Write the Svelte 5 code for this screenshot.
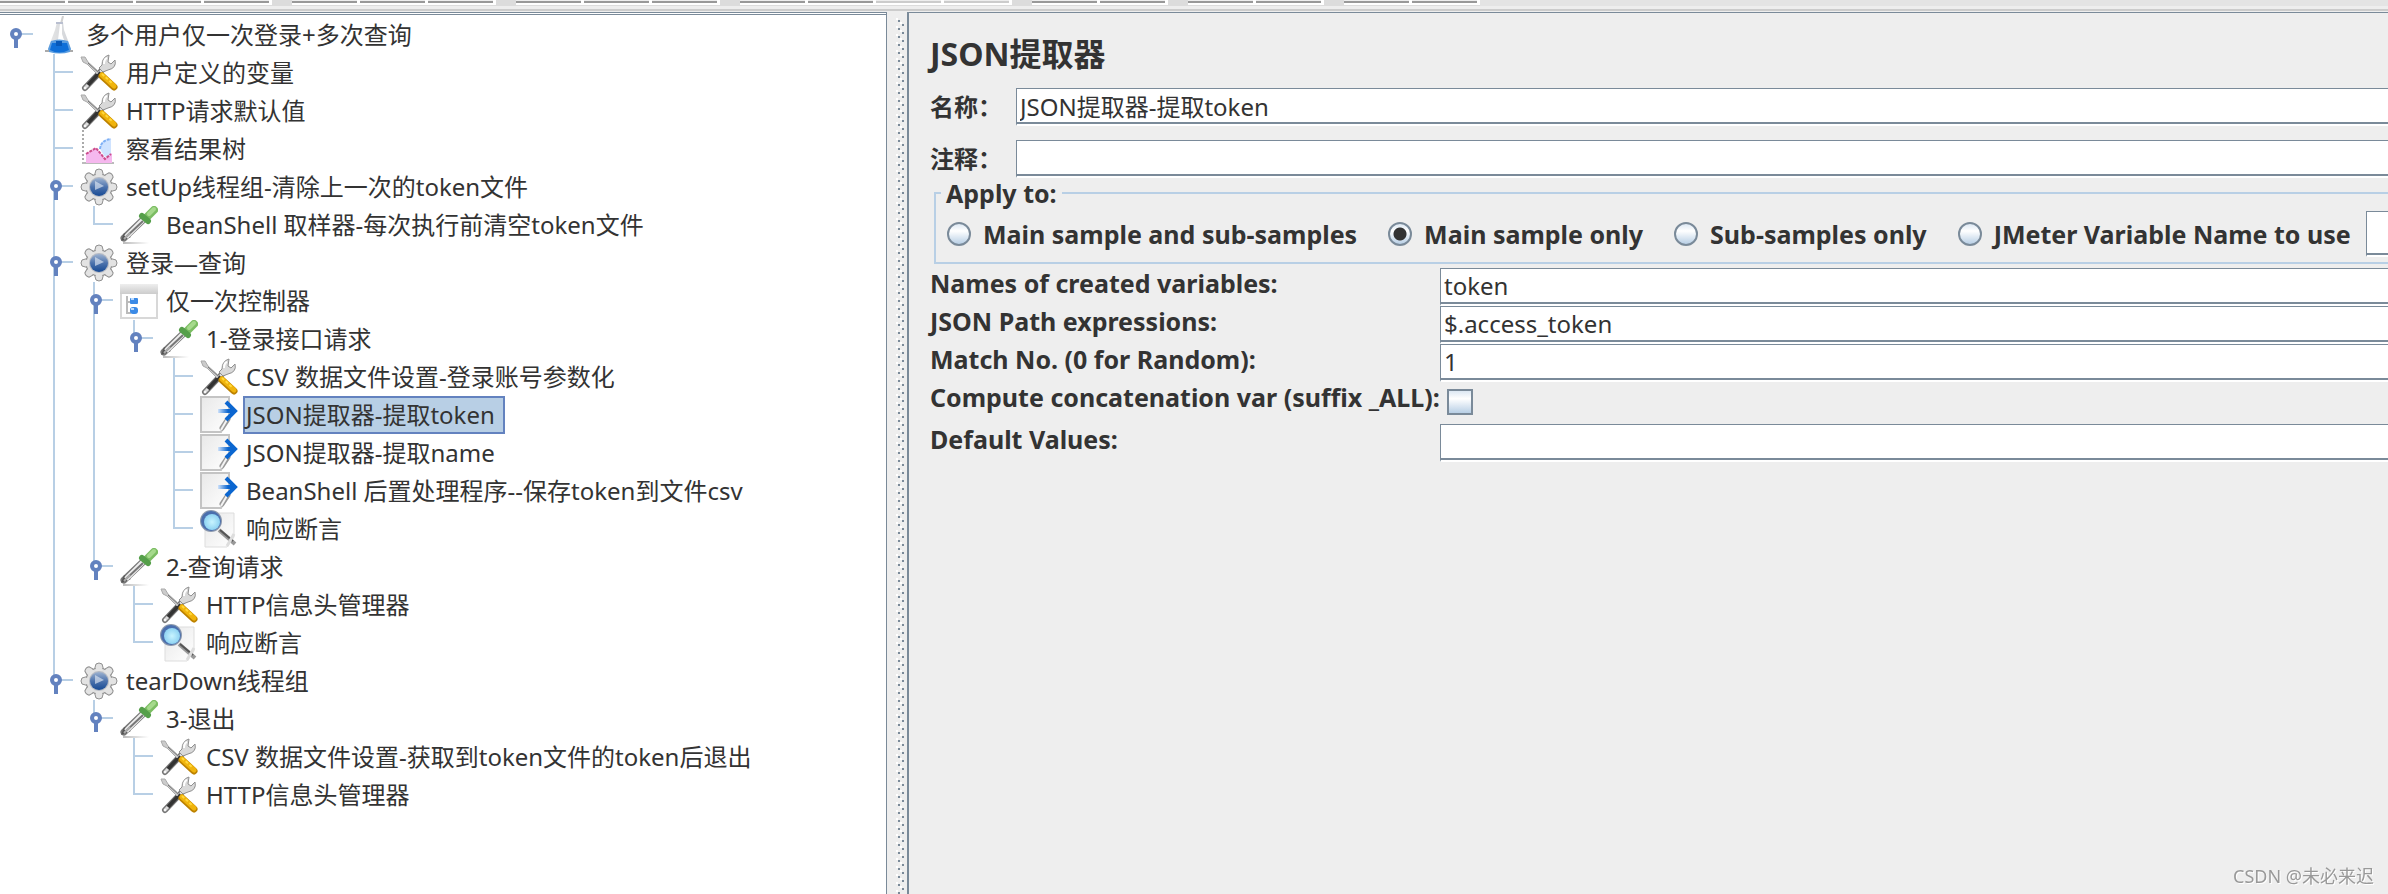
<script>
    // toolbar groups: number of buttons in each, and which are greyed out
    const toolbar = [
        [1, 1, 1, 1],
        [1, 1, 1],
        [1, 1, 1],
        [1, 1, 0, 0],
        [1, 1],
        [1, 1],
        [1, 1],
    ];

    const plan = {
        name: "多个用户仅一次登录+多次查询",
        icon: "flask",
        children: [
            { name: "用户定义的变量", icon: "tools" },
            { name: "HTTP请求默认值", icon: "tools" },
            { name: "察看结果树", icon: "chart" },
            {
                name: "setUp线程组-清除上一次的token文件",
                icon: "gear",
                children: [
                    { name: "BeanShell 取样器-每次执行前清空token文件", icon: "dropper" },
                ],
            },
            {
                name: "登录—查询",
                icon: "gear",
                children: [
                    {
                        name: "仅一次控制器",
                        icon: "controller",
                        children: [
                            {
                                name: "1-登录接口请求",
                                icon: "dropper",
                                children: [
                                    { name: "CSV 数据文件设置-登录账号参数化", icon: "tools" },
                                    { name: "JSON提取器-提取token", icon: "extract" },
                                    { name: "JSON提取器-提取name", icon: "extract" },
                                    { name: "BeanShell 后置处理程序--保存token到文件csv", icon: "extract" },
                                    { name: "响应断言", icon: "lens" },
                                ],
                            },
                        ],
                    },
                    {
                        name: "2-查询请求",
                        icon: "dropper",
                        children: [
                            { name: "HTTP信息头管理器", icon: "tools" },
                            { name: "响应断言", icon: "lens" },
                        ],
                    },
                ],
            },
            {
                name: "tearDown线程组",
                icon: "gear",
                children: [
                    {
                        name: "3-退出",
                        icon: "dropper",
                        children: [
                            { name: "CSV 数据文件设置-获取到token文件的token后退出", icon: "tools" },
                            { name: "HTTP信息头管理器", icon: "tools" },
                        ],
                    },
                ],
            },
        ],
    };

    // lines[i] is true when the vertical guide of level i goes on below the row
    function flatten(node, closed, lines = [false], id = "0") {
        const rows = [{ ...node, id, lines }];
        if (node.children && !closed[id]) {
            node.children.forEach((child, i) => {
                const more = i < node.children.length - 1;
                rows.push(...flatten(child, closed, [...lines, more], id + "." + i));
            });
        }
        return rows;
    }

    let closed = $state({});
    let selected = $state("0.4.0.0.1");
    let rows = $derived(flatten(plan, closed));

    let name = $state("JSON提取器-提取token");
    let comment = $state("");
    let scope = $state("main");
    let variable = $state("");
    let names = $state("token");
    let paths = $state("$.access_token");
    let match = $state("1");
    let concat = $state(false);
    let defaults = $state("");

    const scopes = [
        { value: "all", text: "Main sample and sub-samples" },
        { value: "main", text: "Main sample only" },
        { value: "sub", text: "Sub-samples only" },
        { value: "variable", text: "JMeter Variable Name to use" },
    ];

    const teeth = [0, 45, 90, 135, 180, 225, 270, 315];
</script>

{#snippet icon(kind)}
    <svg class="icon" viewBox="0 0 38 38" aria-hidden="true">
        {#if kind === "flask"}
            <path d="M17 6 H23 L24 14 L30 30 L31 35 H8 L9 30 L15 14 Z" fill="url(#glass)" />
            <path d="M20 8 H22 L22 18 L24 24 H18 Z" fill="#fff" />
            <path d="M21 8 L23 0" stroke="#d0d0d0" stroke-width="2" />
            <path d="M16 7 H23" stroke="#b9bfd0" stroke-width="2" />
            <path d="M11 25 Q19 22 28 25 L31 33 L30 36 Q20 39 9 36 L8 33 Z" fill="#5a9de0" />
            <path d="M12 27 H27 L29 34 Q19 39 10 34 Z" fill="#0f6fd8" />
            <path d="M16 25 H22 V30 H16 Z" fill="#0758b8" />
            <path d="M5 35 H9 M30 35 H33" stroke="#aaa" stroke-width="2" />
        {:else if kind === "tools"}
            <path d="M5 34 L25 13" stroke="#777" stroke-width="6" stroke-linecap="round" />
            <path d="M5 34 L25 13" stroke="#ddd" stroke-width="3" stroke-linecap="round" />
            <path d="M8 31 L20 18" stroke="#333" stroke-width="4" />
            <path d="M22 11 Q22 3 29 1 L28 8 L31 10 L35 6 Q37 14 28 16 L23 18 L19 14 Z" fill="#d9d9d9" stroke="#8f8f8f" />
            <path d="M24 10 Q24 5 27 4" stroke="#fff" stroke-width="2" fill="none" />
            <circle cx="5" cy="34" r="1" fill="#fff" />
            <path d="M1 3 L5 3 L8 8 L19 18 L17 20 L7 10 L3 8 Z" fill="#ccc" stroke="#aaa" />
            <path d="M8 9 L19 19" stroke="#777" stroke-width="1" />
            <path d="M22 22 L34 33" stroke="#bd8200" stroke-width="7" stroke-linecap="round" />
            <path d="M22 21 L34 32" stroke="#f0b40c" stroke-width="5" stroke-linecap="round" />
            <path d="M22 20 L33 30" stroke="#ffd83d" stroke-width="2" stroke-dasharray="3 2" />
        {:else if kind === "chart"}
            <path d="M3 0 V33" stroke="#aaa" stroke-width="2" stroke-dasharray="2 2" />
            <path d="M2 33 H34" stroke="#bbb" stroke-width="2" />
            <path d="M6 24 L16 18 L25 29 L32 23 V33 H6 Z" fill="#f5b8ee" />
            <path d="M20 19 Q20 9 31 9 V25 L25 27 Z" fill="#cfe3ff" />
            <path d="M20 19 Q21 10 31 9" stroke="#7fb0f5" stroke-width="2" fill="none" stroke-dasharray="3 1" />
            <path d="M6 24 L16 18 L25 29 L31 24" fill="none" stroke="#cc4d8c" stroke-width="2" stroke-dasharray="3 1" />
        {:else if kind === "gear"}
            {#each teeth as angle}
                <path d="M14 9 L16 2 Q19 0 22 2 L24 9 Z" fill="#e3e3e3" stroke="#8f8f8f" transform="rotate({angle} 19 19)" />
            {/each}
            <circle cx="19" cy="19" r="13" fill="#dcdcdc" stroke="#8f8f8f" />
            {#each teeth as angle}
                <path d="M15 9 L17 3 H21 L23 9 Z" fill="#e3e3e3" transform="rotate({angle} 19 19)" />
            {/each}
            <circle cx="19" cy="19" r="10" fill="#b5bac4" />
            <circle cx="19" cy="19" r="9" fill="url(#ball)" />
            <path d="M15 13 L24 18 L15 22 Z" fill="#d5e0ee" opacity=".7" />
        {:else if kind === "dropper"}
            <path d="M3 37 H29" stroke="url(#shade)" stroke-width="2" />
            <path d="M4 32 L25 12" stroke="#777" stroke-width="7" stroke-linecap="round" />
            <path d="M1 35 L4 27 L11 31 Z" fill="#555" />
            <path d="M6 31 L25 12" stroke="#eee" stroke-width="5" />
            <path d="M6 31 L23 15" stroke="#777" stroke-width="2" />
            <path d="M4 33 L10 27" stroke="#aaa" stroke-width="2" />
            <path d="M27 11 L34 4" stroke="#7cbd63" stroke-width="8" stroke-linecap="round" />
            <path d="M29 8 L34 3" stroke="#a5d98c" stroke-width="4" stroke-linecap="round" />
            <path d="M22 10 L28 15" stroke="#559f4a" stroke-width="6" stroke-linecap="round" />
        {:else if kind === "controller"}
            <rect x="1" y="3" width="36" height="33" fill="#fff" stroke="#d8d8d8" stroke-width="2" />
            <rect x="0" y="2" width="38" height="10" fill="url(#bar)" />
            <path d="M7 14 V31 H11 M7 20 H11" fill="none" stroke="#bbb" stroke-width="2" />
            <rect x="10" y="16" width="8" height="6" rx="1" fill="#3b8ae6" />
            <rect x="10" y="25" width="8" height="7" rx="3" fill="#3b8ae6" />
            <path d="M11 17 H14 M11 27 H14" stroke="#b9daff" stroke-width="2" />
        {:else if kind === "extract"}
            <path d="M1 1 H29 V20 L21 36 H1 Z" fill="url(#paper)" stroke="#c4c4c4" stroke-width="2" />
            <path d="M28 23 L22 32" stroke="#999" stroke-width="5" stroke-linecap="round" />
            <path d="M28 22 L21 34" stroke="#f4f4f4" stroke-width="2" />
            <path d="M18 15 H34" stroke="url(#fade)" stroke-width="4" />
            <path d="M26 6 L35 15 L26 24" fill="none" stroke="#0b66d0" stroke-width="4" />
        {:else if kind === "lens"}
            <path d="M5 3 H34 V27 L27 37 H5 Z" fill="url(#paper)" stroke="#ddd" />
            <path d="M19 20 L35 34" stroke="#999" stroke-width="4" />
            <path d="M20 20 L33 31" stroke="#555" stroke-width="2" />
            <path d="M27 36 L34 24" stroke="#ddd" stroke-width="3" />
            <circle cx="11" cy="11" r="11" fill="#8c99ad" />
            <circle cx="11" cy="11" r="10" fill="#4a6fae" />
            <circle cx="12" cy="12" r="8" fill="url(#water)" />
        {/if}
    </svg>
{/snippet}

<svg class="defs" aria-hidden="true">
    <defs>
        <linearGradient id="glass"><stop offset="0" stop-color="#e6e6e6" /><stop offset="1" stop-color="#d0d3d8" /></linearGradient>
        <linearGradient id="ball" x2="0" y2="1"><stop offset="0" stop-color="#9db2d0" /><stop offset=".5" stop-color="#4d73ad" /><stop offset="1" stop-color="#174a94" /></linearGradient>
        <linearGradient id="shade" gradientUnits="userSpaceOnUse" x1="3" x2="29"><stop offset="0" stop-color="#bbb" /><stop offset="1" stop-color="#fff" /></linearGradient>
        <linearGradient id="bar" x2="0" y2="1"><stop offset="0" stop-color="#eee" /><stop offset="1" stop-color="#ccc" /></linearGradient>
        <linearGradient id="paper" x2="1" y2="1"><stop offset="0" stop-color="#e8e8e8" /><stop offset="1" stop-color="#fff" /></linearGradient>
        <linearGradient id="fade" gradientUnits="userSpaceOnUse" x1="18" x2="28"><stop offset="0" stop-color="#cfe2fa" /><stop offset="1" stop-color="#0b66d0" /></linearGradient>
        <radialGradient id="water"><stop offset="0" stop-color="#c8f4ff" /><stop offset="1" stop-color="#8fd3f2" /></radialGradient>
    </defs>
</svg>

<div class="app">
    <div class="toolbar" role="toolbar" aria-label="JMeter">
        {#each toolbar as group}
            <div class="group">
                {#each group as enabled}
                    <button class="tool" disabled={!enabled} aria-label="tool"></button>
                {/each}
            </div>
        {/each}
        <div class="rest"></div>
    </div>

    <div class="split">
        <nav class="tree">
            <ul>
                {#each rows as row (row.id)}
                    <li>
                        {#each row.lines as more, level}
                            {@const last = level === row.lines.length - 1}
                            {#if last && row.children}
                                <button class="guide" aria-label={row.name} aria-expanded={!closed[row.id]} onclick={() => (closed[row.id] = !closed[row.id])}>
                                    <svg viewBox="0 0 40 38" aria-hidden="true">
                                        {#if level > 0}
                                            <path class="line" d="M14 0 V{more ? 38 : 18}" />
                                        {/if}
                                        <path class="line" d="M16 18 H33" />
                                        <path class="knob" d={closed[row.id] ? "M16 18 H30" : "M16 18 V32"} />
                                        <circle class="hole" cx="16" cy="18" r="4" />
                                    </svg>
                                </button>
                            {:else}
                                <span class="guide">
                                    <svg viewBox="0 0 40 38" aria-hidden="true">
                                        {#if more || last}
                                            <path class="line" d="M14 0 V{more ? 38 : 19}" />
                                        {/if}
                                        {#if last}
                                            <path class="line" d="M14 18 H33" />
                                        {/if}
                                    </svg>
                                </span>
                            {/if}
                        {/each}
                        {@render icon(row.icon)}
                        <button class="node {selected === row.id ? 'selected' : ''}" onclick={() => (selected = row.id)}>{row.name}</button>
                    </li>
                {/each}
            </ul>
        </nav>

        <div class="divider"></div>

        <main class="panel">
            <h1>JSON提取器</h1>

            <div class="head">
                <label for="name">名称：</label>
                <input id="name" class="field" type="text" bind:value={name} />
                <label for="comment">注释：</label>
                <input id="comment" class="field" type="text" bind:value={comment} />
            </div>

            <fieldset>
                <legend>Apply to:</legend>
                <div class="scopes">
                    {#each scopes as s}
                        <label class="scope">
                            <input type="radio" name="scope" value={s.value} bind:group={scope} />
                            {s.text}
                        </label>
                    {/each}
                    <input class="field variable" type="text" aria-label="JMeter Variable Name" bind:value={variable} />
                </div>
            </fieldset>

            <div class="form">
                <label for="names">Names of created variables:</label>
                <input id="names" class="field" type="text" bind:value={names} />
                <label for="paths">JSON Path expressions:</label>
                <input id="paths" class="field" type="text" bind:value={paths} />
                <label for="match">Match No. (0 for Random):</label>
                <input id="match" class="field" type="text" bind:value={match} />
                <label for="concat">Compute concatenation var (suffix _ALL):</label>
                <input id="concat" type="checkbox" bind:checked={concat} />
                <label for="defaults">Default Values:</label>
                <input id="defaults" class="field" type="text" bind:value={defaults} />
            </div>
        </main>
    </div>

    <div class="mark">CSDN @未必来迟</div>
</div>

<style>
    :global(body) {
        margin: 0;
        background: #eee;
    }
    .app {
        display: flex;
        flex-direction: column;
        min-height: 100vh;
        background: #eee;
        color: #333;
        font-family: "Noto Sans", "Noto Sans CJK SC", sans-serif;
        font-size: 24px;
        line-height: 34px;
    }
    button,
    input {
        font: inherit;
        color: inherit;
        margin: 0;
        padding: 0;
        border: none;
        border-radius: 0;
        background: none;
        box-sizing: border-box;
    }
    .defs {
        position: absolute;
        width: 0;
        height: 0;
    }

    /* toolbar */
    .toolbar {
        display: flex;
        gap: 20px;
        height: 12px;
        box-sizing: border-box;
        background: linear-gradient(#dcdcdc 0 6px, #eee 6px 9px, #ccc 9px 11px, #eee 11px);
    }
    .group {
        display: flex;
        gap: 3px;
        height: 5px;
        padding-right: 3px;
        background: #fff;
    }
    .tool {
        width: 65px;
        height: 3px;
        background: #eee;
        border-bottom: 2px solid #999;
    }
    .tool:disabled {
        border-bottom-color: #ccc;
    }
    .rest {
        flex: 1;
        height: 6px;
        margin-left: -20px;
        background: #e4e4e4;
    }

    .split {
        flex: 1;
        display: grid;
        grid-template-columns: 891fr 16px 1481fr;
    }

    /* tree */
    .tree {
        margin-right: 4px;
        padding-top: 1px;
        border-top: 1px solid #7a8a99;
        border-right: 1px solid #7a8a99;
        background: #fff;
    }
    ul {
        list-style: none;
        margin: 0;
        padding: 1px 0 0;
        border-top: 1px solid #7a8a99;
    }
    li {
        display: flex;
        height: 38px;
    }
    .guide {
        width: 40px;
        height: 38px;
        flex: none;
    }
    .guide svg {
        display: block;
        width: 40px;
        height: 38px;
    }
    .line {
        fill: none;
        stroke: #b8cfe5;
        stroke-width: 2;
    }
    .knob {
        fill: none;
        stroke: #6382bf;
        stroke-width: 4;
    }
    .hole {
        fill: #fff;
        stroke: #6382bf;
        stroke-width: 4;
    }
    .icon {
        display: block;
        width: 38px;
        height: 38px;
        flex: none;
    }
    .node {
        height: 38px;
        margin-left: 5px;
        padding: 0 8px 0 1px;
        border: 2px solid transparent;
        white-space: nowrap;
    }
    .node.selected {
        background: #b8cfe5;
        border-color: #6382bf;
    }

    /* split bar with the embossed dots */
    .divider {
        width: 8px;
        margin: 6px 0 0 5px;
        background: url("data:image/svg+xml,%3Csvg xmlns='http://www.w3.org/2000/svg' width='8' height='8'%3E%3Cpath fill='%23fff' d='M0 0h2v2H0zM4 4h2v2H4z'/%3E%3Cpath fill='%237a8a99' d='M2 2h2v2H2zM6 6h2v2H6z'/%3E%3C/svg%3E");
        cursor: col-resize;
    }

    /* element editor */
    .panel {
        min-width: 0;
        overflow: hidden;
        padding: 17px 0 0 21px;
        border-top: 1px solid #7a8a99;
        border-left: 2px solid #7a8a99;
    }
    h1 {
        margin: 0 0 10px;
        font-size: 32px;
        line-height: 48px;
        font-weight: bold;
    }
    label,
    legend {
        font-weight: bold;
        white-space: nowrap;
    }
    .field {
        width: 100%;
        min-width: 0;
        height: 38px;
        padding: 0 4px 2px 3px;
        border-top: 1px solid #7a8a99;
        border-left: 1px solid #7a8a99;
        border-bottom: 2px solid #fff;
        background: #fff;
        box-shadow: inset 0 -2px #7a8a99;
        outline: none;
    }
    .head {
        display: grid;
        grid-template-columns: 86px 1fr;
        row-gap: 14px;
        align-items: center;
    }
    fieldset {
        min-width: 0;
        margin: 0 0 4px 4px;
        padding: 0;
        border: 2px solid #b8cfe5;
        border-right: none;
    }
    legend {
        margin-left: 5px;
        padding: 0 5px;
        font-size: 25px;
        line-height: 30px;
    }
    .scopes {
        display: flex;
        align-items: center;
        gap: 31px;
        padding: 3px 0 5px 11px;
    }
    .scope {
        display: flex;
        align-items: center;
        gap: 12px;
        font-size: 25px;
    }
    input[type="radio"],
    input[type="checkbox"] {
        appearance: none;
        flex: none;
        border: 2px solid #7a8a99;
        background: linear-gradient(#dde8f3, #fff 35%, #b8cfe5);
    }
    input[type="radio"] {
        width: 24px;
        height: 24px;
        border-radius: 12px;
    }
    input[type="radio"]:checked {
        background:
            radial-gradient(circle, #333 6px, transparent 7px),
            linear-gradient(#dde8f3, #fff 35%, #b8cfe5);
    }
    input[type="checkbox"] {
        width: 26px;
        height: 26px;
        margin: 7px 0 9px 7px;
    }
    input[type="checkbox"]:checked {
        background: #333;
    }
    .variable {
        flex: 1 0 20px;
        height: 46px;
        margin-left: -16px;
    }
    .form {
        display: grid;
        grid-template-columns: 510px 1fr;
        font-size: 25px;
        line-height: 30px;
    }
    .form .field {
        font-size: 24px;
    }

    .mark {
        position: fixed;
        right: 14px;
        bottom: 5px;
        font-size: 18px;
        line-height: 26px;
        color: #999;
        text-shadow: 1px 1px #fff;
    }
</style>
